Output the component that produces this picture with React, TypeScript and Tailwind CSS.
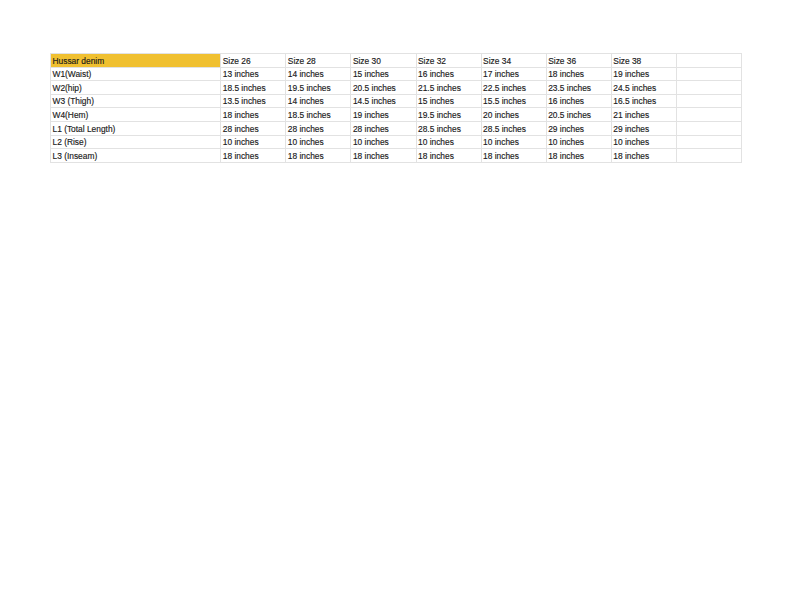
const headers = ["Size 26", "Size 28", "Size 30", "Size 32", "Size 34", "Size 36", "Size 38", ""];
const rows: { h: string; label: string; cells: string[] }[] = [
  { h: "h-[13px]", label: "W1(Waist)", cells: ["13 inches", "14 inches", "15 inches", "16 inches", "17 inches", "18 inches", "19 inches", ""] },
  { h: "h-[14px]", label: "W2(hip)", cells: ["18.5 inches", "19.5 inches", "20.5 inches", "21.5 inches", "22.5 inches", "23.5 inches", "24.5 inches", ""] },
  { h: "h-[13px]", label: "W3 (Thigh)", cells: ["13.5 inches", "14 inches", "14.5 inches", "15 inches", "15.5 inches", "16 inches", "16.5 inches", ""] },
  { h: "h-[14px]", label: "W4(Hem)", cells: ["18 inches", "18.5 inches", "19 inches", "19.5 inches", "20 inches", "20.5 inches", "21 inches", ""] },
  { h: "h-[14px]", label: "L1 (Total Length)", cells: ["28 inches", "28 inches", "28 inches", "28.5 inches", "28.5 inches", "29 inches", "29 inches", ""] },
  { h: "h-[13px]", label: "L2 (Rise)", cells: ["10 inches", "10 inches", "10 inches", "10 inches", "10 inches", "10 inches", "10 inches", ""] },
  { h: "h-[14px]", label: "L3 (Inseam)", cells: ["18 inches", "18 inches", "18 inches", "18 inches", "18 inches", "18 inches", "18 inches", ""] },
];
const cell = "border border-[#e2e2e2] p-0 pl-[1.5px] align-bottom leading-[11px] overflow-hidden whitespace-nowrap";

export default function App() {
  return (
    <div className="w-[792px] h-[612px] bg-white pt-[53px] pl-[50px] font-['Liberation_Sans',Arial,sans-serif] text-[8.4px] text-[#1a1a1a] [-webkit-text-stroke:0.15px_#1a1a1a]">
      <table className="table-fixed border-collapse w-[692px]">
        <colgroup>
          <col className="w-[170px]" />
          {headers.map((_, i) => (
            <col key={i} className="w-[65px]" />
          ))}
        </colgroup>
        <tbody>
          <tr className="h-[14px]">
            <td className={`${cell} bg-[#f0c030]`}>Hussar denim</td>
            {headers.map((t, i) => (
              <td key={i} className={cell}>{t}</td>
            ))}
          </tr>
          {rows.map((r) => (
            <tr key={r.label} className={r.h}>
              <td className={cell}>{r.label}</td>
              {r.cells.map((t, i) => (
                <td key={i} className={cell}>{t}</td>
              ))}
            </tr>
          ))}
        </tbody>
      </table>
    </div>
  );
}
